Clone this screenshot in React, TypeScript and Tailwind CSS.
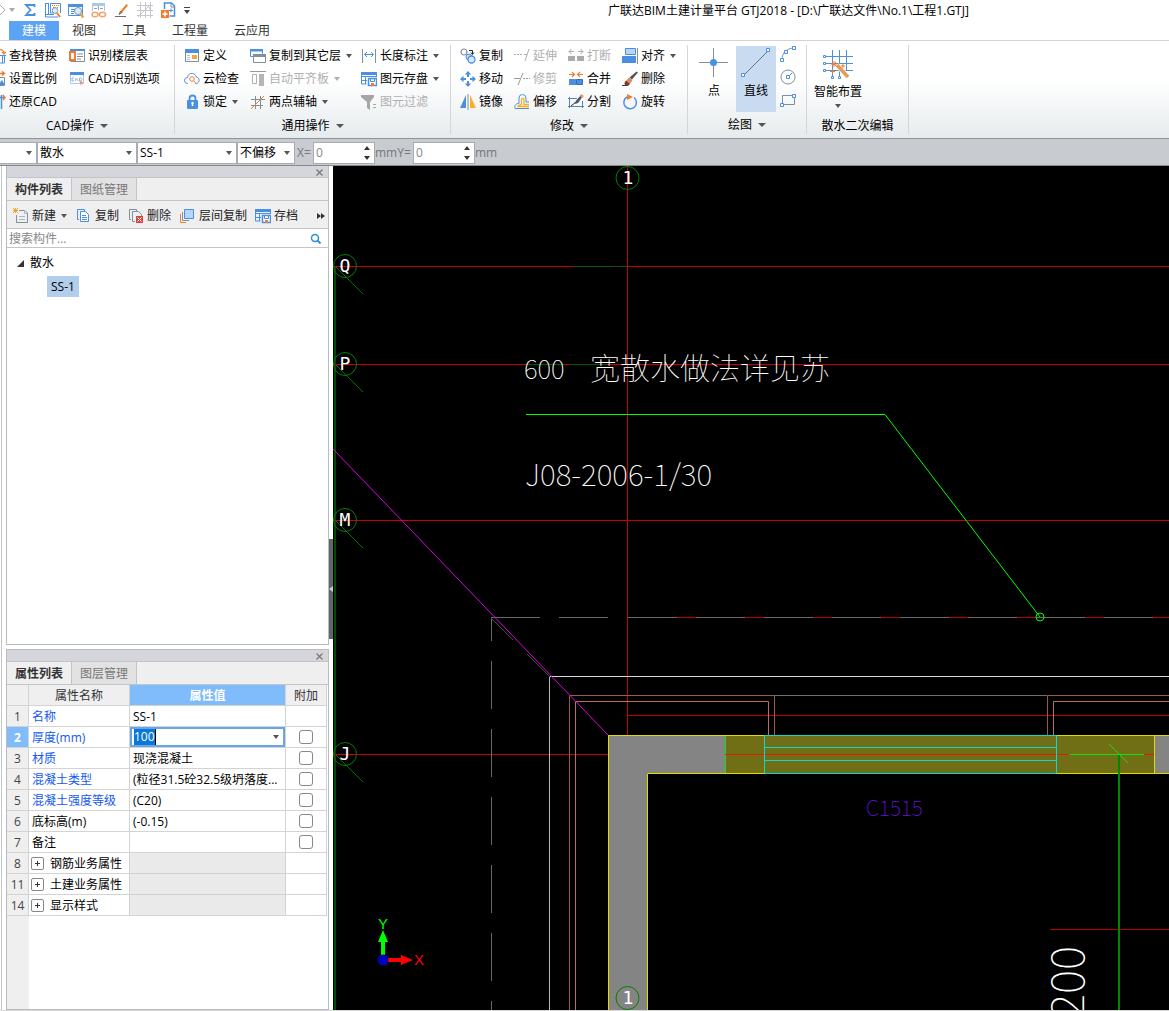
import type { ReactNode } from "react";

const BLUE = "#4a90e2";
const ORANGE = "#f07d2e";
const STEEL = "#7f909c";

function Icon({ children, size = 16 }: { children: ReactNode; size?: number }) {
  return (
    <svg
      width={size}
      height={size}
      viewBox={`0 0 ${size} ${size}`}
      fill="none"
      className="shrink-0"
      aria-hidden="true"
    >
      {children}
    </svg>
  );
}

function Caret({ wide = false }: { wide?: boolean }) {
  return (
    <svg width={wide ? 8 : 6} height={4} viewBox="0 0 6 4" preserveAspectRatio="none" className="shrink-0" aria-hidden="true">
      <path d="M0 0h6L3 4z" fill="currentColor" />
    </svg>
  );
}

const icons = {
  sigma: <path d="M12.500 5V3H4l4.500 5L4 13h8.500v-2" stroke={BLUE} strokeWidth="1.800" />,
  drawing: (
    <>
      <path d="M.5 1v14H13M3.500 1v11M.5 1.500h3M15.500 11V1.500h-10v9.500h3" stroke={BLUE} />
      <path d="M1 12.500h8" stroke={BLUE} />
      <path d="M7 3h1v1H7zm2 0h1v1H9zm2 0h1v1h-1zm2 0h1v1h-1zM8 5h1v1H8zm2 0h1v1h-1zm2 0h1v1h-1z" fill={ORANGE} />
      <circle cx="10" cy="8.500" r="2.800" fill="#e5eef8" stroke="#8196a7" />
      <path d="m12 11 3 4" stroke={ORANGE} strokeWidth="2" />
    </>
  ),
  report: (
    <>
      <path d="M.5 2.500h14v11H.5z" stroke={BLUE} fill="#fff" />
      <path d="M0 2h15v3H0z" fill={BLUE} />
      <path d="M3 7.500h4M3 9.500h3M3 11.500h3" stroke={BLUE} />
      <circle cx="10" cy="9" r="3.500" fill="#dcebfb" stroke="#8196a7" />
      <path d="m12.500 12 3 3.500" stroke="#e8a33a" strokeWidth="2.500" />
    </>
  ),
  glasses: (
    <>
      <path d="M1.500 9V1.500h12V9" stroke="#a9c8ea" />
      <path d="M1 1h13v3H1z" fill="#a9c8ea" />
      <path d="M3 6.500h3M9 6.500h3M7.500 4v4" stroke="#8fa4b5" />
      <ellipse cx="4" cy="12.500" rx="3" ry="2.300" stroke="#f6a271" strokeWidth="1.500" />
      <ellipse cx="11.500" cy="12.500" rx="3" ry="2.300" stroke="#f6a271" strokeWidth="1.500" />
      <path d="M7 12h2" stroke="#f6a271" />
    </>
  ),
  pencil: (
    <>
      <path d="M12.500 2 14 3.500 8 10.500 5.500 12l1-3z" fill={ORANGE} />
      <path d="M1 14.500h11M5 12.500l1.500-3.500L8 10.500z" stroke="#7b6a60" />
    </>
  ),
  mesh: (
    <path d="M0 3.500h16M0 8.500h16M0 13.500h16M3.500 0v16M8.500 0v16M13.500 0v16M1 15 14 2M8 3c3 0 5 2 5 5" stroke="#c4c7cc" />
  ),
  addPage: (
    <>
      <path d="M4.500 7V1h7l3 3v10h-5" stroke={BLUE} strokeWidth="1.500" />
      <path d="M11 1v4h4" stroke={STEEL} />
      <path d="M1 8h8v8H1z" fill={ORANGE} />
      <path d="M5 9.500v5M2.500 12h5" stroke="#fff" strokeWidth="1.500" />
      <path d="M9 8.500h4M11 6.500v4" stroke={BLUE} />
    </>
  ),
  find: (
    <>
      <path d="M9 2c3-1 5 1 5 3m-2-1 2 2 2-2" stroke={ORANGE} strokeWidth="1.200" />
      <path d="M7 7.500h9M9.500 7v8h5V7M12.500 7v8" stroke={BLUE} />
    </>
  ),
  scale: (
    <>
      <path d="M8 2.500h6M12 .5l2.500 2-2.500 2" stroke={ORANGE} strokeWidth="1.500" />
      <path d="M5 6.500h9.500v8H5z" stroke={STEEL} />
      <path d="m8 14 4-5 3 5z" fill={BLUE} />
    </>
  ),
  restore: (
    <>
      <path d="M8 3.500h6M11.500 1v14" stroke={BLUE} strokeWidth="1.500" />
      <path d="m13 1 2 2.500L13 6" stroke={ORANGE} strokeWidth="1.500" />
    </>
  ),
  floorTable: (
    <>
      <path d="M1.500 1.500h14v12h-14z" stroke={STEEL} fill="#fff" />
      <path d="M1 1h15v2H1z" fill={BLUE} />
      <path d="M8 6h6M8 8.500h6M8 11h4" stroke={STEEL} />
      <path d="M1 4h5v8H1z" fill="#fff" stroke={ORANGE} strokeWidth="2" />
    </>
  ),
  cadOptions: (
    <>
      <path d="M1.500 1.500h13v11h-13z" stroke="#a9c8ea" fill="#fff" />
      <path d="M1 1h14v3H1z" fill={BLUE} />
      <path d="M5 7H3v3h2M6 10l1.500-3L9 10M10.500 7v3h1.500l1-1.500L12 7z" stroke="#8fb4e0" />
      <path d="m10 9 5 3-2.500.5L12 15z" fill="#f58f78" />
    </>
  ),
  define: (
    <>
      <path d="M1.500 1.500h13v12h-13z" stroke={STEEL} fill="#fff" />
      <path d="M1 1h14v4H1z" fill={BLUE} />
      <path d="M3 7.500h3M3 9.500h3M3 11.500h3" stroke="#b9c3cc" />
      <path d="M8 7h5v4H8z" fill="#f4a73b" />
    </>
  ),
  cloud: (
    <>
      <path d="M4 12.500H3.500a3 3 0 0 1 0-6C4 3.500 6 2 8.500 2.500c2 .2 3.500 1.700 3.700 3.500 3.500.5 4.300 5.500 0 6.500h-1" stroke={BLUE} />
      <circle cx="8" cy="8" r="2.300" stroke={ORANGE} />
      <path d="m10 10 2 2.500" stroke={ORANGE} />
    </>
  ),
  lock: (
    <>
      <path d="M5.500 7V4.500a3 3 0 0 1 6 0V7" stroke={BLUE} strokeWidth="1.800" />
      <rect x="3" y="6" width="11" height="9" rx="1" fill={BLUE} />
      <path d="M8.500 9v3" stroke="#fff" strokeWidth="1.500" />
      <circle cx="8.500" cy="9" r="1.200" fill="#fff" />
    </>
  ),
  copyFloor: (
    <>
      <path d="M.5 1.500h12v7H.5z" stroke={BLUE} fill="#fff" />
      <path d="M0 1h13v2.500H0z" fill={BLUE} />
      <path d="M3.500 6.500h12v8h-12z" stroke={STEEL} fill="#fff" />
      <path d="M3 6h13v3H3z" fill={STEEL} />
    </>
  ),
  alignSlab: (
    <>
      <path d="M0 .5h16" stroke="#9a9a9a" />
      <path d="M2.500 3.500h4v9h-4z" stroke="#b0b0b0" />
      <path d="M9 3h5v12H9z" fill="#b5b5b5" />
    </>
  ),
  auxAxis: (
    <>
      <path d="M1 5.500h14M1 11.500h12M5.500 2v13M10.500 2v13" stroke={STEEL} />
      <path d="M1 15 14 2" stroke={ORANGE} />
    </>
  ),
  length: (
    <>
      <path d="M1.500 1v14M14.500 1v14" stroke={STEEL} />
      <path d="M3.500 6.500h9M6 4 3.500 6.500 6 9M10 4l2.500 2.500L10 9" stroke={BLUE} />
    </>
  ),
  savePart: (
    <>
      <path d="M.5 1v12h5M15.500 1v5M1 5.500h14M1 9.500h5M4.500 5v8" stroke={BLUE} />
      <path d="M0 1h16v3H0z" fill={BLUE} />
      <path d="M7.500 7.500h8v7h-8z" fill="#fff" stroke={BLUE} strokeWidth="1.500" />
      <path d="M9.500 8v2.500h4V8" stroke={BLUE} />
      <path d="M10 12h3v3h-3z" fill={ORANGE} />
    </>
  ),
  filter: (
    <>
      <path d="M0 1h13v2L9 8v8l-3-2V8L0 3z" fill="#a6a6a6" />
      <path d="M12 10.500h3M12 13.500h3" stroke="#a6a6a6" />
    </>
  ),
  copy: (
    <>
      <circle cx="4" cy="4" r="3" stroke={STEEL} strokeWidth="1.200" />
      <path d="M9 2.500h3.500V6M11 4.500l1.500 2 1.500-2" stroke="#222" />
      <circle cx="9" cy="9" r="3" fill="#c5dcf5" stroke={BLUE} />
      <circle cx="11.500" cy="11.500" r="3.500" fill="#d8e8fa" stroke={BLUE} strokeWidth="1.300" />
    </>
  ),
  move: (
    <g fill={BLUE}>
      <path d="M8 0 4.800 3.500h6.400zM8 16l-3.200-3.500h6.400zM0 8l3.500-3.200v6.400zM16 8l-3.500-3.200v6.400z" />
      <path d="M7 3h2v3H7zm0 7h2v3H7zM3 7h3v2H3zm7 0h3v2h-3z" />
    </g>
  ),
  mirror: (
    <>
      <path d="M6 1v13H0z" fill={BLUE} />
      <path d="M10 1v13h6z" fill="#f7b027" />
      <path d="M8 0v16" stroke={STEEL} />
    </>
  ),
  extend: <path d="M0 6.500h2m1 0h2m1 0h2m2 0h3M11 13l4-12" stroke="#b0b0b0" />,
  trim: <path d="M0 7.500h6M9 7.500h2m1 0h2m1 0h1M4 14 9 2" stroke="#9a9a9a" />,
  offset: (
    <>
      <path d="M15 14.500H1c-1-3 1-5 4-5V4a3.500 3.500 0 0 1 7 0v4h3" stroke={BLUE} />
      <path d="M15 12.500H4c0-1.500 3-1 3.500-2.500V5a1.500 1.500 0 0 1 2.500 0v5.500h5" stroke="#f7b027" strokeWidth="1.300" />
    </>
  ),
  breakLine: (
    <g>
      <path d="M1 3.500h5M3.500 1 1 3.500 3.500 6M10 3.500h5M12.500 1 15 3.500 12.500 6" stroke="#aaa" />
      <path d="M0 8h7v5H0zM9 8h7v5H9z" fill="#aaa" />
    </g>
  ),
  merge: (
    <>
      <path d="M1 3.500h5M4 1l2.500 2.500L4 6M15 3.500h-5M12 1 9.500 3.500 12 6" stroke={ORANGE} strokeWidth="1.200" />
      <path d="M1 8h7v6H1z" fill={BLUE} />
      <path d="M8.500 8.500h6v5h-6z" fill={BLUE} stroke="#2f6fc0" />
    </>
  ),
  split: (
    <>
      <path d="M0 4.500h9M1.500 3v11M0 12.500h16M14.500 7v7" stroke="#5a83b8" />
      <path d="M13 2 8 8l-5 4" stroke="#222" />
      <path d="m13 1 2 1-5 7-3 1 1-3z" fill="#4d5660" />
      <path d="m13 0 3 2-2 2-2-2z" fill="#e59a6b" />
    </>
  ),
  align: (
    <>
      <path d="M3.500.5h10v6h-10z" fill="#b9d5f5" stroke={BLUE} />
      <path d="M0 8h14v7H0z" fill={BLUE} />
      <path d="M15.500 0v16" stroke={STEEL} />
    </>
  ),
  erase: (
    <>
      <path d="m14.500.5 1.500 1-6 7-2.500-2z" fill="#555" />
      <path d="m7 6.500 3.500 2.500L8 13l-4-3z" fill="#d98d66" />
      <path d="m4 9.500 4 3.500c-2 2.500-4 2-5 1s-.5-3 1-4.500z" fill="#7a3a20" />
      <path d="M0 14.500h6" stroke="#444" />
    </>
  ),
  rotate: (
    <>
      <path d="M5 3a6.300 6.300 0 1 0 7 .5" stroke={BLUE} strokeWidth="1.500" />
      <path d="m5 0 6 3-6 3z" fill={ORANGE} />
    </>
  ),
  newPage: (
    <>
      <path d="M6 2.500h6l2.500 2.500v9.500h-11V7" stroke={STEEL} />
      <path d="M11.500 2v3.500h3M6 8.500h6M6 11.500h6" stroke="#a8b4be" />
      <path d="M0 0h1v1H0zm2 0h1v1H2zm2 0h1v1H4zM1 1h3v3H1zM0 2h5v1H0zm0 2h1v1H0zm2 0h1v1H2zm2 0h1v1H4z" fill="#f2a33a" />
    </>
  ),
  copyPage: (
    <>
      <path d="M3 11.500H1.500v-10h7V3" stroke={BLUE} />
      <path d="M4.500 3.500h5l3 3v7h-8z" fill="#fff" stroke={BLUE} />
      <path d="M6 7.500h4M6 9.500h5M6 11.500h5" stroke={BLUE} />
    </>
  ),
  deletePage: (
    <>
      <path d="M3 11.500H1.500v-10h7V3M7 13.500H4.500v-10h6l3 3V8" stroke={STEEL} />
      <path d="M8 8h7v7H8z" fill="#d8453e" />
      <path d="m9.500 9.500 4 4m0-4-4 4" stroke="#fff" />
    </>
  ),
  layers: (
    <>
      <path d="M.5 6v8.500H6" stroke={ORANGE} />
      <path d="M2.500 4v8.500H9" stroke={STEEL} />
      <path d="M4.500 1.500h9v9h-9z" fill="#b5d5fa" stroke={BLUE} />
    </>
  ),
  search: (
    <>
      <circle cx="7" cy="7" r="3.500" stroke="#2f8fd0" strokeWidth="1.500" />
      <path d="m9.500 9.500 3 3" stroke="#2f8fd0" strokeWidth="2" />
    </>
  ),
  arc: (
    <>
      <path d="M2 14C2 7 6 2.500 14 2" stroke={STEEL} />
      <path d="M.5 12.500h3v3h-3zM4.500 4.500h3v3h-3zM12.500.5h3v3h-3z" fill="#fff" stroke={BLUE} />
    </>
  ),
  circle: (
    <>
      <circle cx="8" cy="8" r="7" stroke={STEEL} />
      <path d="m8 8 4-4" stroke={BLUE} />
      <path d="M6.500 6.500h3v3h-3z" fill="#fff" stroke={BLUE} />
    </>
  ),
  rectangle: (
    <>
      <path d="M2.500 3.500h12v9h-12z" stroke={STEEL} />
      <path d="M.5 11.500h3v3h-3zM12.500 2.500h3v3h-3z" fill="#fff" stroke={BLUE} />
    </>
  ),
  point: (
    <>
      <path d="M0 14.500h11m7 0h11M14.500 0v11m0 7v11" stroke={STEEL} />
      <circle cx="14.500" cy="14.500" r="3.500" fill={BLUE} />
    </>
  ),
  line: (
    <>
      <path d="M3 27 27 3" stroke="#5f7286" />
      <path d="M.5 25.500h3v3h-3zM25.500.5h3v3h-3z" fill="#fff" stroke={BLUE} />
    </>
  ),
  smart: (
    <>
      <path d="M2 6.500h28M2 13.500h28M2 20.500h28M9.500 0v29M16.500 0v29M23.500 0v20" stroke={BLUE} />
      <path d="M.5 5.500h2v2h-2zM.5 12.500h2v2h-2zM.5 19.500h2v2h-2zM8.500 26.500h2v2h-2zM15.500 26.500h2v2h-2z" fill="#fff" stroke={BLUE} />
      <path d="m14 15 12 13" stroke="#fff" strokeWidth="5" />
      <path d="m14 15 11 12" stroke="#e59a55" strokeWidth="3.500" />
      <path d="M11 11v6M8 14h6m-5-2 4 4m0-4-4 4M20 14v4M18 16h4M9.500 19v5M7 21.500h5" stroke={ORANGE} />
    </>
  ),
};

type IconName = keyof typeof icons;
type Command = { label: string; icon: IconName; menu?: boolean; disabled?: boolean };

const quickAccess: { label: string; icon: IconName }[] = [
  { label: "汇总计算", icon: "sigma" },
  { label: "查看工程量", icon: "drawing" },
  { label: "查看报表", icon: "report" },
  { label: "查看计算式", icon: "glasses" },
  { label: "编辑", icon: "pencil" },
  { label: "轴网", icon: "mesh" },
  { label: "新增", icon: "addPage" },
];

const menuTabs = ["建模", "视图", "工具", "工程量", "云应用"];

const cadLeft: Command[] = [
  { label: "查找替换", icon: "find" },
  { label: "设置比例", icon: "scale" },
  { label: "还原CAD", icon: "restore" },
];
const cadRight: Command[] = [
  { label: "识别楼层表", icon: "floorTable" },
  { label: "CAD识别选项", icon: "cadOptions" },
];

const commonColumns: Command[][] = [
  [
    { label: "定义", icon: "define" },
    { label: "云检查", icon: "cloud" },
    { label: "锁定", icon: "lock", menu: true },
  ],
  [
    { label: "复制到其它层", icon: "copyFloor", menu: true },
    { label: "自动平齐板", icon: "alignSlab", menu: true, disabled: true },
    { label: "两点辅轴", icon: "auxAxis", menu: true },
  ],
  [
    { label: "长度标注", icon: "length", menu: true },
    { label: "图元存盘", icon: "savePart", menu: true },
    { label: "图元过滤", icon: "filter", disabled: true },
  ],
];

const modifyColumns: Command[][] = [
  [
    { label: "复制", icon: "copy" },
    { label: "移动", icon: "move" },
    { label: "镜像", icon: "mirror" },
  ],
  [
    { label: "延伸", icon: "extend", disabled: true },
    { label: "修剪", icon: "trim", disabled: true },
    { label: "偏移", icon: "offset" },
  ],
  [
    { label: "打断", icon: "breakLine", disabled: true },
    { label: "合并", icon: "merge" },
    { label: "分割", icon: "split" },
  ],
  [
    { label: "对齐", icon: "align", menu: true },
    { label: "删除", icon: "erase" },
    { label: "旋转", icon: "rotate" },
  ],
];

const rows = [
  { no: 1, name: "名称", value: "SS-1", blue: true },
  { no: 2, name: "厚度(mm)", value: "100", blue: true, check: true, active: true },
  { no: 3, name: "材质", value: "现浇混凝土", blue: true, check: true },
  { no: 4, name: "混凝土类型", value: "(粒径31.5砼32.5级坍落度...", blue: true, check: true },
  { no: 5, name: "混凝土强度等级", value: "(C20)", blue: true, check: true },
  { no: 6, name: "底标高(m)", value: "(-0.15)", check: true },
  { no: 7, name: "备注", value: "", check: true },
  { no: 8, name: "钢筋业务属性", group: true },
  { no: 11, name: "土建业务属性", group: true },
  { no: 14, name: "显示样式", group: true },
];

function CommandButton({ label, icon, menu, disabled }: Command) {
  return (
    <button
      disabled={disabled}
      className="flex h-[23px] items-center gap-[3px] whitespace-nowrap text-black disabled:text-[#b0b0b0]"
    >
      <Icon>{icons[icon]}</Icon>
      {label}
      {menu && (
        <span className={disabled ? "ml-0.5 text-[#b0b0b0]" : "ml-0.5 text-[#555]"}>
          <Caret />
        </span>
      )}
    </button>
  );
}

function Group({ title, menu = true, className, children }: { title: string; menu?: boolean; className: string; children: ReactNode }) {
  return (
    <section className={`flex shrink-0 flex-col ${className}`}>
      <div className="flex h-[72px] pt-[3px]">{children}</div>
      <div className="flex h-[26px] items-center justify-center gap-1.5">
        {title}
        {menu && (
          <span className="text-[#555]">
            <Caret wide />
          </span>
        )}
      </div>
    </section>
  );
}

function Divider() {
  return <div className="my-1 w-px shrink-0 bg-[#d3d5d8]" />;
}

function TitleBar() {
  return (
    <header className="flex h-5 items-center whitespace-nowrap">
      <svg width="6" height="12" viewBox="0 0 6 12" fill="none" aria-hidden="true">
        <path d="M0 1 5 6 0 11" stroke="#aaa" />
      </svg>
      <span className="mr-[7px] ml-[3px] text-[#aaa]">
        <Caret />
      </span>
      <div className="flex gap-[7px]">
        {quickAccess.map((q) => (
          <button key={q.icon} aria-label={q.label}>
            <Icon>{icons[q.icon]}</Icon>
          </button>
        ))}
      </div>
      <button aria-label="自定义快速访问工具栏" className="ml-2 flex flex-col items-center gap-0.5 text-[#444]">
        <span className="h-px w-1.5 bg-[#444]" />
        <Caret />
      </button>
      <h1 className="ml-[418px] pt-0.5 leading-5">广联达BIM土建计量平台 GTJ2018 - [D:\广联达文件\No.1\工程1.GTJ]</h1>
    </header>
  );
}

function MenuTabs() {
  return (
    <nav className="flex h-[21px] items-end border-b border-[#d4d4d4] pl-[9px] whitespace-nowrap">
      {menuTabs.map((tab, i) => (
        <button
          key={tab}
          className={
            i === 0 ? "h-[19px] w-[50px] bg-[#5ba3f5] pt-px text-white" : "h-[19px] px-[13px] pt-px text-[#333]"
          }
        >
          {tab}
        </button>
      ))}
    </nav>
  );
}

function Ribbon() {
  return (
    <div className="flex h-[98px] overflow-hidden border-b border-[#8f9398] bg-linear-to-b from-white from-40% to-[#e6ebed]">
      <Group title="CAD操作" className="w-[174px] [&>div:last-child]:pr-5">
        <div>
          {cadLeft.map((c) => (
            <button key={c.label} className="flex h-[23px] items-center whitespace-nowrap">
              <span className="mr-[3px] flex w-1.5 justify-end overflow-hidden">
                <Icon>{icons[c.icon]}</Icon>
              </span>
              {c.label}
            </button>
          ))}
        </div>
        <div className="ml-3">
          {cadRight.map((c) => (
            <CommandButton key={c.label} {...c} />
          ))}
        </div>
      </Group>
      <Divider />
      <Group title="通用操作" className="w-[275px]">
        <div className="grid grid-cols-[66px_111px_90px] pl-[9px]">
          {commonColumns.map((column) => (
            <div key={column[0].label}>
              {column.map((c) => (
                <CommandButton key={c.label} {...c} />
              ))}
            </div>
          ))}
        </div>
      </Group>
      <Divider />
      <Group title="修改" className="w-[236px]">
        <div className="grid grid-cols-[54px_54px_54px_64px] pl-[9px]">
          {modifyColumns.map((column) => (
            <div key={column[0].label}>
              {column.map((c) => (
                <CommandButton key={c.label} {...c} />
              ))}
            </div>
          ))}
        </div>
      </Group>
      <Divider />
      <Group title="绘图" className="w-[118px]">
        <div className="flex pt-0.5">
          <button className="ml-1.5 flex h-[66px] w-10 flex-col items-center gap-[5px] pt-0.5">
            <Icon size={30}>{icons.point}</Icon>点
          </button>
          <button className="ml-0.5 flex h-[66px] w-10 flex-col items-center gap-[5px] bg-[#c9dbf1] pt-0.5">
            <Icon size={30}>{icons.line}</Icon>直线
          </button>
          <div className="ml-1 flex flex-col gap-[7px]">
            <button aria-label="弧线">
              <Icon>{icons.arc}</Icon>
            </button>
            <button aria-label="圆">
              <Icon>{icons.circle}</Icon>
            </button>
            <button aria-label="矩形">
              <Icon>{icons.rectangle}</Icon>
            </button>
          </div>
        </div>
      </Group>
      <Divider />
      <Group title="散水二次编辑" menu={false} className="w-[101px] [&>div:last-child]:pt-0.5">
        <button className="ml-[7px] flex flex-col items-center gap-1 pt-1.5">
          <Icon size={30}>{icons.smart}</Icon>
          智能布置
          <span className="text-[#555]">
            <Caret />
          </span>
        </button>
      </Group>
      <Divider />
    </div>
  );
}

function Combo({ label, value, className }: { label: string; value: string; className: string }) {
  return (
    <div className={`relative h-[22px] border border-[#a8abb0] bg-white ${className}`}>
      <select aria-label={label} className="h-full w-full appearance-none pl-0.5 text-black outline-none">
        <option>{value}</option>
      </select>
      <span className="pointer-events-none absolute top-2 right-1 text-[#555]">
        <Caret />
      </span>
    </div>
  );
}

function OffsetInput({ label }: { label: string }) {
  return (
    <div className="flex h-[22px] w-[62px] items-center border border-[#a8abb0] bg-white pr-1">
      <input aria-label={label} defaultValue="0" className="w-0 flex-1 pl-0.5 text-[#888] outline-none" />
      <svg width="6" height="14" viewBox="0 0 6 14" aria-hidden="true">
        <path d="M0 4h6L3 0zM0 10h6l-3 4z" fill="#333" />
      </svg>
    </div>
  );
}

function PropertyBar() {
  return (
    <div className="flex h-[27px] items-center border-b border-[#85898e] bg-[#c8cbd0] pt-px text-[#777]">
      <Combo label="楼层" value="" className="w-[37px] border-l-0" />
      <Combo label="构件类型" value="散水" className="w-[100px]" />
      <Combo label="构件" value="SS-1" className="w-[100px]" />
      <Combo label="偏移方式" value="不偏移" className="w-[58px]" />
      <span className="w-[18px] pl-0.5">X=</span>
      <OffsetInput label="X" />
      <span className="w-[38px]">mmY=</span>
      <OffsetInput label="Y" />
      <span>mm</span>
    </div>
  );
}

function PanelHead({ active, other }: { active: string; other: string }) {
  return (
    <>
      <div className="flex h-3 shrink-0 items-center justify-end border-b border-[#c2c4c9] bg-[#d5d6dc] pt-px pr-[5px]">
        <button aria-label="关闭">
          <svg width="7" height="7" viewBox="0 0 7 7" fill="none" aria-hidden="true">
            <path d="m.5.5 6 6m0-6-6 6" stroke="#777" strokeWidth="1.200" />
          </svg>
        </button>
      </div>
      <div className="flex h-[23px] shrink-0 border-b border-[#c2c4c9] bg-[#efeff0]">
        <button className="w-[65px] border-r border-[#c2c4c9] pt-0.5 font-bold text-[#333]">{active}</button>
        <button className="w-[65px] border-r border-[#c2c4c9] bg-[#e2e2e3] pt-0.5 text-[#777]">{other}</button>
      </div>
    </>
  );
}

function ComponentPanel() {
  return (
    <section className="flex min-h-0 flex-[4] flex-col border border-t-0 border-[#b9bbc0] bg-white">
      <PanelHead active="构件列表" other="图纸管理" />
      <div className="flex h-7 shrink-0 items-center border-b border-[#c2c4c9] bg-[#efeff0] pt-0.5 pl-[6px] whitespace-nowrap text-[#222]">
        <button className="flex w-[63px] items-center gap-[3px]">
          <Icon>{icons.newPage}</Icon>新建
          <span className="ml-0.5 text-[#555]">
            <Caret />
          </span>
        </button>
        <button className="flex w-[52px] items-center gap-[3px]">
          <Icon>{icons.copyPage}</Icon>复制
        </button>
        <button className="flex w-[52px] items-center gap-[3px]">
          <Icon>{icons.deletePage}</Icon>删除
        </button>
        <button className="flex w-[75px] items-center gap-[3px]">
          <Icon>{icons.layers}</Icon>层间复制
        </button>
        <button className="flex items-center gap-[3px]">
          <Icon>{icons.savePart}</Icon>存档
        </button>
        <button aria-label="更多" className="mr-[3px] ml-auto">
          <svg width="8" height="6" viewBox="0 0 8 6" aria-hidden="true">
            <path d="M0 0v6l4-3zM4 0v6l4-3z" fill="#333" />
          </svg>
        </button>
      </div>
      <label className="flex h-[19px] shrink-0 items-center border-b border-[#c2c4c9] pt-px pr-1 pl-0.5">
        <input aria-label="搜索构件" placeholder="搜索构件..." className="min-w-0 flex-1 outline-none placeholder:text-[#888]" />
        <Icon>{icons.search}</Icon>
      </label>
      <ul className="pt-[3px]">
        <li>
          <div className="flex h-6 items-center gap-1.5 pl-[10px]">
            <svg width="7" height="7" viewBox="0 0 7 7" aria-hidden="true">
              <path d="M7 0v7H0z" fill="#333" />
            </svg>
            散水
          </div>
          <ul className="flex pt-px pl-10">
            <li className="bg-[#b3cdec] px-1 leading-[21px]">SS-1</li>
          </ul>
        </li>
      </ul>
    </section>
  );
}

function PropertyPanel() {
  return (
    <section className="flex min-h-0 flex-[3] flex-col border border-[#b9bbc0] bg-white">
      <PanelHead active="属性列表" other="图层管理" />
      <table className="w-full table-fixed border-separate border-spacing-0 pr-px leading-[18px] [&_td]:border-r [&_td]:border-b [&_td]:border-[#d3d3d3] [&_th]:border-r [&_th]:border-b [&_th]:border-[#d3d3d3] [&_th]:pt-0.5">
        <colgroup>
          <col className="w-[22px]" />
          <col className="w-[101px]" />
          <col />
          <col className="w-[41px]" />
        </colgroup>
        <thead>
          <tr className="h-[21px] bg-[#efeff0] text-[#333]">
            <th />
            <th className="font-normal">属性名称</th>
            <th className="bg-[#80bbfb] font-bold text-white">属性值</th>
            <th className="font-normal">附加</th>
          </tr>
        </thead>
        <tbody>
          {rows.map((r) => (
            <tr key={r.no} className="h-[21px] whitespace-nowrap">
              <th
                className={
                  r.active ? "bg-[#80bbfb] font-bold text-white" : "bg-[#efeff0] font-normal text-[#444]"
                }
              >
                {r.no}
              </th>
              <td className={r.blue ? "pt-0.5 pl-[3px] text-[#1558f0]" : "pt-0.5 pl-[3px] text-black"}>
                {r.group ? (
                  <div className="-ml-px flex items-center gap-1.5">
                    <button
                      aria-label={`展开${r.name}`}
                      className="mb-0.5 flex size-[13px] items-center justify-center rounded-xs border border-[#888]"
                    >
                      <svg width="5" height="5" viewBox="0 0 5 5" aria-hidden="true">
                        <path d="M2 0h1v2h2v1H3v2H2V3H0V2h2z" fill="#333" />
                      </svg>
                    </button>
                    {r.name}
                  </div>
                ) : (
                  r.name
                )}
              </td>
              {r.active ? (
                <td className="p-0">
                  <div className="flex h-5 items-center border-2 border-[#66a5e8] pr-1 pl-0.5">
                    <span className="flex h-4 w-[22px] items-center border-r border-black bg-[#0a78d6]">
                      <input aria-label={r.name} defaultValue={r.value} className="w-full text-white outline-none" />
                    </span>
                    <span className="ml-auto text-[#555]">
                      <Caret />
                    </span>
                  </div>
                </td>
              ) : (
                <td className={r.group ? "bg-[#eaeaea]" : "pt-0.5 pl-[3px]"}>{r.value}</td>
              )}
              <td className="p-0">
                {r.check && (
                  <input
                    type="checkbox"
                    aria-label={`附加${r.name}`}
                    className="mx-auto block size-[14px] appearance-none rounded-[3px] border border-[#888] bg-white"
                  />
                )}
              </td>
            </tr>
          ))}
        </tbody>
      </table>
      <div className="w-[22px] flex-1 bg-[#efeff0]" />
    </section>
  );
}

const axes = [
  { name: "Q", y: 100 },
  { name: "P", y: 198 },
  { name: "M", y: 354 },
  { name: "J", y: 588 },
];

function Drawing() {
  return (
    <svg className="min-w-0 flex-1 bg-black" fill="none" role="img" aria-label="平面图">
      {/* axis grid */}
      <path d="M2 100V4000" stroke="#004a00" strokeWidth="2" />
      <path d="M0 100.500H4000M0 198.500H4000M0 354.500H4000M0 588.500H275M294.500 0V569" stroke="#c80000" />
      <path d="M241 100.500h41M284 100.500h10M193 198.500h38M236 198.500h38" stroke="#005a00" />
      <path d="M294 549.500H4000M717 763.500H4000" stroke="#c00000" />
      {axes.map((a) => (
        <g key={a.name}>
          <path d={`M3 ${a.y + 1}l27 27`} stroke="#007000" />
          <circle cx="12" cy={a.y} r="11.500" stroke="#008000" />
        </g>
      ))}

      {/* apron outline and eaves */}
      <path d="M158 451.500h49M226 451.500h49M295 451.500H4000" stroke="#686868" />
      <path d="M344 451.500H4000" stroke="#b80000" strokeDasharray="19 49" />
      <clipPath id="below-eaves">
        <path d="M150 451h20v4000h-20z" />
      </clipPath>
      <path d="M158.500 427V4000" stroke="#686868" strokeDasharray="48 20" clipPath="url(#below-eaves)" />
      <path d="m158 452 22 22M194 488l23 23" stroke="#4a4a4a" />
      <path d="M217 510.500H4000" stroke="#d8d8d8" />
      <path d="M216.500 511V4000" stroke="#b8b8b8" />
      <path d="M441 529.500h273" stroke="#707070" />
      <path d="M236.500 4000V529.500H441.500V569M714.500 569V529.500H4000" stroke="#9c5a48" />
      <path d="M242.500 4000V535.500H435.500V569M720.500 569V535.500H4000" stroke="#b8705a" />
      <path d="M0 283 275 569" stroke="#e000e0" />

      {/* walls */}
      <path d="M275 569h117v38h-78v4000h-39zM822 569h4000v38H822z" fill="#848484" />
      <path d="M392 569h430v38H392z" fill="#706f16" />
      <path d="M275.500 4000V569.500H4000M314.500 4000V607.500H4000M821.500 569v38" stroke="#e0dc00" />
      <path d="M392.500 570v37" stroke="#20d820" />
      <path d="M392 588.500h344M811 588.500h10" stroke="#d82008" />
      <path d="M431.500 569.500h292v38h-292zM431 581.500h292M431 594.500h292" stroke="#10d8d0" />
      <path d="M786 588v4000" stroke="#008800" strokeWidth="2" />
      <path d="M737 588.500h74M776 578l19 19" stroke="#10e010" />

      {/* leader */}
      <path d="M193 248.500H552L707 451" stroke="#00ff00" />
      <circle cx="707" cy="451" r="4" stroke="#00ff00" />

      <g fill="#fff" className="font-['Noto_Sans_CJK_SC',sans-serif] font-thin">
        <text x="191" y="213" fontSize="26">600</text>
        <text x="257" y="213" fontSize="30">宽散水做法详见苏</text>
        <text x="192" y="320" fontSize="30">J08-2006-1/30</text>
        <text x="533" y="650" fontSize="21" fill="#6a14e0">C1515</text>
        <text transform="translate(751 780) rotate(-90)" fontSize="46" textAnchor="end">200</text>
      </g>

      <circle cx="294.500" cy="12" r="11.500" stroke="#008000" />
      <circle cx="294.500" cy="832" r="11.500" stroke="#008000" />
      <g fill="#fff" fontSize="18" textAnchor="middle" className="font-['DejaVu_Sans_Mono',monospace]">
        {axes.map((a) => (
          <text key={a.name} x="12" y={a.y + 6}>
            {a.name}
          </text>
        ))}
        <text x="295" y="18">1</text>
        <text x="295" y="838">1</text>
      </g>

      {/* coordinate marker */}
      <path d="M48 790v-14h-3l5-12 5 12h-3v14z" fill="#00ff00" />
      <path d="M54 792h14v-3l12 5-12 5v-3H54z" fill="#ff0000" />
      <circle cx="50" cy="794" r="5.500" fill="#0000b8" />
      <g fontSize="15" textAnchor="middle" className="font-['Liberation_Sans',sans-serif]">
        <text x="50" y="763" fill="#00ff00">Y</text>
        <text x="86" y="799" fill="#ff0000">X</text>
      </g>
    </svg>
  );
}

export default function App() {
  return (
    <div className="flex min-h-screen flex-col overflow-hidden bg-white font-['Open_Sans','Noto_Sans_CJK_SC',sans-serif] text-xs text-black">
      <TitleBar />
      <MenuTabs />
      <Ribbon />
      <PropertyBar />
      <main className="flex flex-1 border-b border-[#d8d8d8]">
        <div className="mr-1 w-0.5 border-r border-[#c2c4c9]" />
        <aside className="flex w-[323px] shrink-0 flex-col gap-1">
          <ComponentPanel />
          <PropertyPanel />
        </aside>
        <div className="flex w-1 shrink-0 flex-col pt-[373px]">
          <button aria-label="收起面板" className="flex h-[100px] w-full items-center bg-[#5f6670]">
            <svg width="4" height="6" viewBox="0 0 4 6" aria-hidden="true">
              <path d="M4 0v6L0 3z" fill="#c8cbd0" />
            </svg>
          </button>
        </div>
        <Drawing />
      </main>
    </div>
  );
}
